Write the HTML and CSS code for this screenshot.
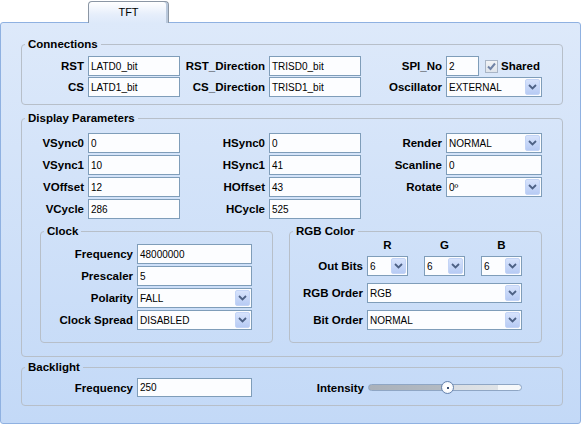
FILE: index.html
```html
<!DOCTYPE html>
<html>
<head>
<meta charset="utf-8">
<title>TFT</title>
<link rel="stylesheet" href="styles.css">
</head>
<body>
<div class="window">
  <div class="tabs"><div class="tab">TFT</div></div>
  <div class="panel">
    <fieldset class="group conn">
      <legend>Connections</legend>
      <div class="grid6">
        <label class="lbl">RST</label><div class="field">LATD0_bit</div>
        <label class="lbl">RST_Direction</label><div class="field">TRISD0_bit</div>
        <label class="lbl">SPI_No</label>
        <div class="spi">
          <div class="field w33">2</div>
          <span class="check"><svg width="11" height="11" viewBox="0 0 11 11"><path d="M2 5.5 L4.5 8 L9 2.5" fill="none" stroke="#7083a6" stroke-width="2"/></svg></span>
          <span class="lbl-inline">Shared</span>
        </div>
        <label class="lbl">CS</label><div class="field">LATD1_bit</div>
        <label class="lbl">CS_Direction</label><div class="field">TRISD1_bit</div>
        <label class="lbl">Oscillator</label>
        <div class="field select"><span>EXTERNAL</span><span class="drop"><svg width="9" height="6" viewBox="0 0 9 6"><path d="M1 1 L4.5 4.5 L8 1" fill="none" stroke="#4d6185" stroke-width="1.8"/></svg></span></div>
      </div>
    </fieldset>

    <fieldset class="group disp">
      <legend>Display Parameters</legend>
      <div class="grid6">
        <label class="lbl">VSync0</label><div class="field">0</div>
        <label class="lbl">HSync0</label><div class="field">0</div>
        <label class="lbl">Render</label>
        <div class="field select"><span>NORMAL</span><span class="drop"><svg width="9" height="6" viewBox="0 0 9 6"><path d="M1 1 L4.5 4.5 L8 1" fill="none" stroke="#4d6185" stroke-width="1.8"/></svg></span></div>

        <label class="lbl">VSync1</label><div class="field">10</div>
        <label class="lbl">HSync1</label><div class="field">41</div>
        <label class="lbl">Scanline</label><div class="field">0</div>

        <label class="lbl">VOffset</label><div class="field">12</div>
        <label class="lbl">HOffset</label><div class="field">43</div>
        <label class="lbl">Rotate</label>
        <div class="field select"><span>0º</span><span class="drop"><svg width="9" height="6" viewBox="0 0 9 6"><path d="M1 1 L4.5 4.5 L8 1" fill="none" stroke="#4d6185" stroke-width="1.8"/></svg></span></div>

        <label class="lbl">VCycle</label><div class="field">286</div>
        <label class="lbl">HCycle</label><div class="field">525</div>
        <span></span><span></span>
      </div>

      <div class="sub">
        <fieldset class="group clock">
          <legend>Clock</legend>
          <div class="grid-clock">
            <label class="lbl">Frequency</label><div class="field">48000000</div>
            <label class="lbl">Prescaler</label><div class="field">5</div>
            <label class="lbl">Polarity</label>
            <div class="field select"><span>FALL</span><span class="drop"><svg width="9" height="6" viewBox="0 0 9 6"><path d="M1 1 L4.5 4.5 L8 1" fill="none" stroke="#4d6185" stroke-width="1.8"/></svg></span></div>
            <label class="lbl">Clock Spread</label>
            <div class="field select"><span>DISABLED</span><span class="drop"><svg width="9" height="6" viewBox="0 0 9 6"><path d="M1 1 L4.5 4.5 L8 1" fill="none" stroke="#4d6185" stroke-width="1.8"/></svg></span></div>
          </div>
        </fieldset>

        <fieldset class="group rgb">
          <legend>RGB Color</legend>
          <div class="rgb-head"><span>R</span><span>G</span><span>B</span></div>
          <div class="grid-rgb">
            <label class="lbl">Out Bits</label>
            <div class="bits">
              <div class="field select"><span>6</span><span class="drop"><svg width="9" height="6" viewBox="0 0 9 6"><path d="M1 1 L4.5 4.5 L8 1" fill="none" stroke="#4d6185" stroke-width="1.8"/></svg></span></div>
              <div class="field select"><span>6</span><span class="drop"><svg width="9" height="6" viewBox="0 0 9 6"><path d="M1 1 L4.5 4.5 L8 1" fill="none" stroke="#4d6185" stroke-width="1.8"/></svg></span></div>
              <div class="field select"><span>6</span><span class="drop"><svg width="9" height="6" viewBox="0 0 9 6"><path d="M1 1 L4.5 4.5 L8 1" fill="none" stroke="#4d6185" stroke-width="1.8"/></svg></span></div>
            </div>
            <label class="lbl">RGB Order</label>
            <div class="field select"><span>RGB</span><span class="drop"><svg width="9" height="6" viewBox="0 0 9 6"><path d="M1 1 L4.5 4.5 L8 1" fill="none" stroke="#4d6185" stroke-width="1.8"/></svg></span></div>
            <label class="lbl">Bit Order</label>
            <div class="field select"><span>NORMAL</span><span class="drop"><svg width="9" height="6" viewBox="0 0 9 6"><path d="M1 1 L4.5 4.5 L8 1" fill="none" stroke="#4d6185" stroke-width="1.8"/></svg></span></div>
          </div>
        </fieldset>
      </div>
    </fieldset>

    <fieldset class="group back">
      <legend>Backlight</legend>
      <div class="grid-back">
        <label class="lbl">Frequency</label><div class="field">250</div>
        <label class="lbl">Intensity</label>
        <div class="slider">
          <div class="track"></div>
          <div class="thumb"><span class="dot"></span></div>
        </div>
      </div>
    </fieldset>
  </div>
</div>
</body>
</html>
```

FILE: styles.css
```css
* { box-sizing: border-box; }

body {
  margin: 0;
  background: #ffffff;
  font-family: "Liberation Sans", Arial, sans-serif;
  font-size: 11px;
  color: #000;
}

.window {
  width: 583px;
  height: 425px;
}

.tabs {
  height: 22px;
  padding-left: 88px;
  display: flex;
  align-items: flex-end;
}

.tab {
  position: relative;
  z-index: 1;
  width: 81px;
  height: 22px;
  margin-bottom: -1px;
  border: 1px solid #8b96a4;
  border-bottom: none;
  border-radius: 4px 4px 0 0;
  background: linear-gradient(#ffffff, #e6eefb 60%, #dde9fa);
  box-shadow: inset -2px 0 0 #b9c8dc;
  text-align: center;
  line-height: 21px;
  font-size: 11px;
}

.panel {
  width: 581px;
  height: 402px;
  border: 1px solid #8fb1e1;
  border-radius: 3px;
  background: linear-gradient(#dde9fa, #c3d9f7);
  padding: 15px 0 0 20px;
}

.group {
  margin: 0;
  padding: 0;
  border: 1px solid #b7bfc9;
  border-radius: 4px;
  min-inline-size: 0;
}

.group legend {
  margin-left: 3px;
  padding: 0 3px;
  font-weight: bold;
  font-size: 11.5px;
  line-height: 13px;
}

.conn {
  width: 542px;
  padding-top: 5px;
  padding-bottom: 7px;
}

.disp {
  width: 542px;
  margin-top: 7px;
  padding-top: 8px;
  padding-bottom: 13px;
}

.back {
  width: 542px;
  margin-top: 4px;
  padding-top: 4px;
  padding-bottom: 8px;
}

.grid6 {
  display: grid;
  grid-template-columns: 66px 92px 89px 92px 85px 96px;
  grid-auto-rows: 20px;
}

.conn .grid6 { row-gap: 1px; }
.disp .grid6 { row-gap: 2px; }

.lbl {
  font-weight: bold;
  font-size: 11.5px;
  text-align: right;
  padding-right: 4px;
  align-self: center;
  white-space: nowrap;
}

.field {
  height: 20px;
  border: 1px solid #7f9db9;
  background: #fcfdff;
  padding-left: 2px;
  font-size: 10px;
  display: flex;
  align-items: center;
  white-space: nowrap;
}

.select .drop {
  margin-left: auto;
  width: 15px;
  height: 16px;
  margin-right: 1px;
  border: 1px solid #c3d4f6;
  border-radius: 2px;
  background: linear-gradient(#d7e3fc, #b7cbf4);
  display: flex;
  align-items: center;
  justify-content: center;
}

.spi {
  display: flex;
  align-items: center;
}

.w33 { width: 33px; }

.check {
  width: 13px;
  height: 13px;
  margin-left: 6px;
  border: 1px solid #a9b5c6;
  background: linear-gradient(#f1f3f6, #dfe4eb);
  display: flex;
  align-items: center;
  justify-content: center;
}

.lbl-inline {
  margin-left: 3px;
  font-weight: bold;
  font-size: 11.5px;
}

.sub {
  display: flex;
  gap: 16px;
  margin: 6px 0 0 18px;
}

.clock {
  width: 233px;
  padding: 6px 0 12px;
}

.grid-clock {
  display: grid;
  grid-template-columns: 96px 115px;
  grid-auto-rows: 20px;
  row-gap: 2px;
}

.rgb {
  width: 253px;
  padding: 1px 0 12px;
}

.rgb-head {
  display: flex;
  justify-content: space-between;
  width: 155px;
  margin-left: 77px;
  height: 13px;
  margin-bottom: 4px;
  font-weight: bold;
  font-size: 11.5px;
  line-height: 13px;
}

.rgb-head span {
  width: 41px;
  text-align: center;
}

.grid-rgb {
  display: grid;
  grid-template-columns: 77px 155px;
  grid-auto-rows: 20px;
  row-gap: 7px;
}

.bits {
  display: flex;
  justify-content: space-between;
}

.bits .field { width: 41px; }

.grid-back {
  display: grid;
  grid-template-columns: 115px 115px 116px 154px;
  grid-auto-rows: 19px;
}

.grid-back .field { height: 19px; }

.slider {
  position: relative;
  height: 19px;
}

.track {
  position: absolute;
  left: 0;
  right: 0;
  top: 6px;
  height: 7px;
  border: 1px solid #8fa6c4;
  border-radius: 4px;
  background: linear-gradient(to right, #aab1ba 0, #b3bac2 50%, #d9dde2 50%, #dfe3e7 85%, #f6f8fa 85%);
}

.thumb {
  position: absolute;
  left: 73px;
  top: 3px;
  width: 13px;
  height: 13px;
  border: 1px solid #6784ae;
  border-radius: 50%;
  background: radial-gradient(circle, #ffffff 40%, #e3ebf7);
  display: flex;
  align-items: center;
  justify-content: center;
}

.dot {
  width: 2px;
  height: 2px;
  background: #3b4f72;
}
```
